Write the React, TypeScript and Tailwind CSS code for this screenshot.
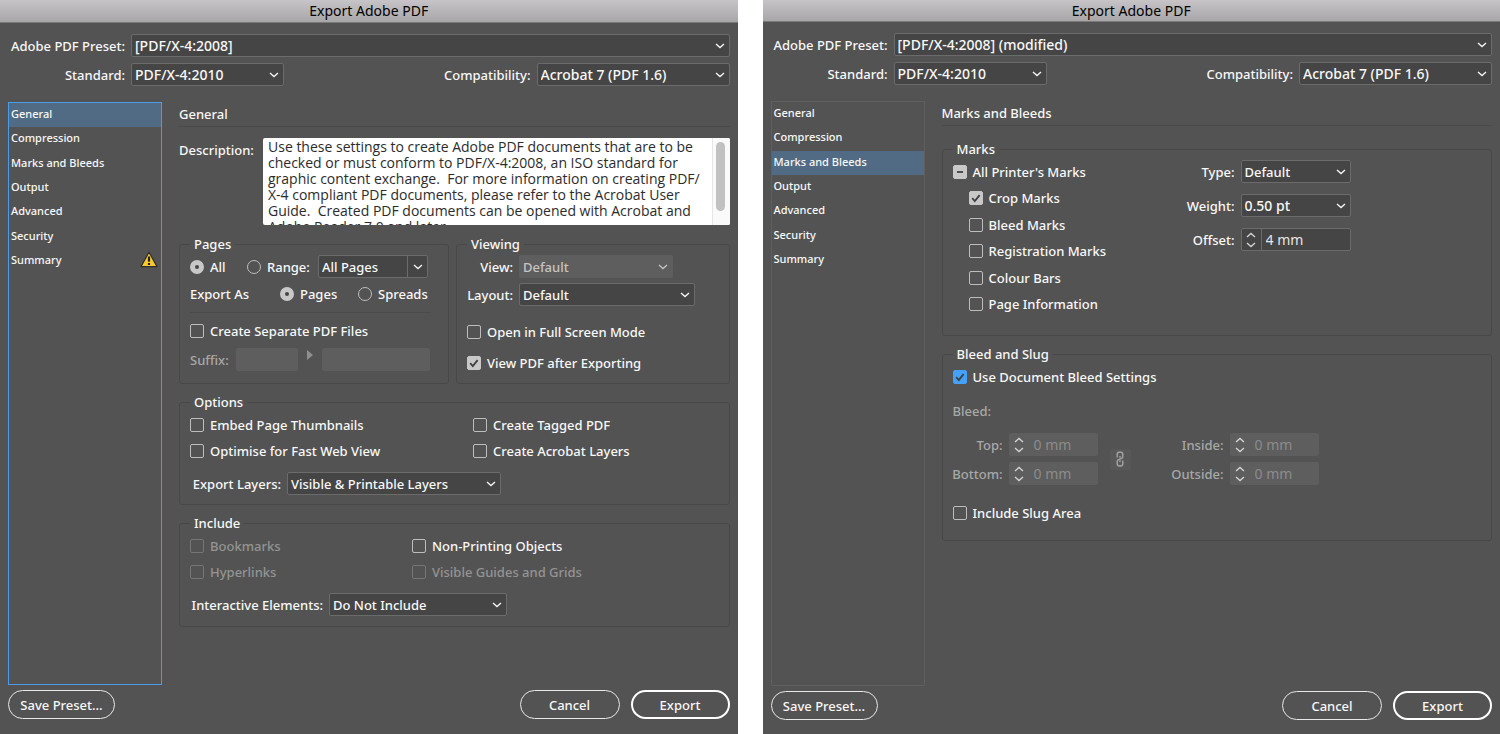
import { useId, type ReactNode } from "react";

function Chevron({ className = "" }: { className?: string }) {
  return (
    <svg viewBox="0 0 10 6" className={`h-[6px] w-[10px] ${className}`} fill="none" stroke="currentColor" strokeWidth="1.3" aria-hidden="true">
      <path d="M1 1l4 3.6L9 1" />
    </svg>
  );
}

type SelectProps = { label: string; value: string; width: string; labelWidth?: string; disabled?: boolean; large?: boolean };

function SelectRow({ label, value, width, labelWidth = "", disabled, large }: SelectProps) {
  const id = useId();
  return (
    <div className="flex items-center gap-[6px]">
      <label htmlFor={id} className={`flex shrink-0 justify-end whitespace-nowrap ${labelWidth}`}>
        {label}
      </label>
      <div className={`relative ${width}`}>
        <select
          id={id}
          disabled={disabled}
          className={`block h-[23px] w-full appearance-none rounded-[2px] border pr-6 pl-[3px] ${large ? "text-[14px]" : ""} ${
            disabled ? "border-[#5e5e5e] bg-[#5e5e5e] text-[#c4c4c4] opacity-100" : "border-[#6b6b6b] bg-[#454545]"
          }`}
        >
          <option>{value}</option>
        </select>
        <Chevron className={`pointer-events-none absolute top-[9px] right-[5px] ${disabled ? "text-[#c4c4c4]" : ""}`} />
      </div>
    </div>
  );
}

type CheckProps = { label: string; state?: "on" | "mixed" | "focus"; disabled?: boolean };

function Check({ label, state, disabled }: CheckProps) {
  return (
    <label className={`flex h-[18px] items-center gap-[6px] whitespace-nowrap ${disabled ? "text-[#949494]" : ""}`}>
      <span className="relative block size-[14px]">
        <input
          type="checkbox"
          defaultChecked={state !== undefined}
          disabled={disabled}
          className={`peer block size-[14px] appearance-none rounded-[2px] border ${
            disabled ? "border-[#767676]" : "border-[#bdbdbd]"
          } ${state === "focus" ? "checked:border-[#46a0f5] checked:bg-[#46a0f5]" : "checked:border-[#c8c8c8] checked:bg-[#c8c8c8]"}`}
        />
        <svg
          viewBox="0 0 14 14"
          className="pointer-events-none absolute inset-0 hidden size-[14px] peer-checked:block"
          fill="none"
          stroke="#404040"
          strokeWidth="1.8"
          aria-hidden="true"
        >
          {state === "mixed" ? <path d="M4 7h6" /> : <path d="M3.2 7.2l2.6 2.9 4.8-6" />}
        </svg>
      </span>
      {label}
    </label>
  );
}

function Radio({ label, name, checked }: { label: string; name: string; checked?: boolean }) {
  return (
    <label className="flex h-[18px] items-center gap-[6px] whitespace-nowrap">
      <input
        type="radio"
        name={name}
        defaultChecked={checked}
        className="block size-[14px] appearance-none rounded-full border border-[#bdbdbd] checked:border-[5px] checked:border-[#c8c8c8] checked:bg-[#454545]"
      />
      {label}
    </label>
  );
}

type StepperProps = { label: string; value: string; labelWidth: string; width: string; disabled?: boolean };

function Stepper({ label, value, labelWidth, width, disabled }: StepperProps) {
  const id = useId();
  return (
    <div className={`flex items-center gap-[6px] ${disabled ? "text-[#a8a8a8]" : ""}`}>
      <label htmlFor={id} className={`flex shrink-0 justify-end whitespace-nowrap ${labelWidth}`}>
        {label}
      </label>
      <div
        className={`flex h-[23px] rounded-[2px] border ${width} ${
          disabled ? "border-[#5e5e5e] bg-[#5e5e5e]" : "border-[#6b6b6b] bg-[#454545]"
        }`}
      >
        <div className={`flex w-[20px] shrink-0 flex-col items-center justify-center gap-[4px] border-r text-[#d5d5d5] ${disabled ? "border-transparent" : "border-[#6b6b6b]"}`}>
          <button type="button" aria-label={`Increase ${label}`} disabled={disabled}>
            <Chevron className="block rotate-180" />
          </button>
          <button type="button" aria-label={`Decrease ${label}`} disabled={disabled}>
            <Chevron className="block" />
          </button>
        </div>
        <input
          id={id}
          defaultValue={value}
          disabled={disabled}
          className={`w-full min-w-0 pl-1 text-[14px] font-normal ${disabled ? "text-[#8c8c8c]" : "text-[#e6e6e6]"}`}
        />
      </div>
    </div>
  );
}

function Group({ title, className = "", children }: { title: string; className?: string; children: ReactNode }) {
  return (
    <fieldset className={`min-w-0 rounded-[3px] border border-[#484848] px-[10px] ${className}`}>
      <legend className="px-[4px] leading-[18px]">{title}</legend>
      {children}
    </fieldset>
  );
}

function Warning() {
  return (
    <svg viewBox="0 0 18 17" className="h-[17px] w-[18px]" role="img" aria-label="Warning">
      <path d="M9 1.2L17 15.6H1z" fill="#f8ca2c" stroke="#2e2e2e" strokeWidth="1.2" strokeLinejoin="round" />
      <path d="M9 5.5v5.2" stroke="#222" strokeWidth="2.2" />
      <path d="M9 12v2" stroke="#222" strokeWidth="2.2" />
    </svg>
  );
}

const sections = ["General", "Compression", "Marks and Bleeds", "Output", "Advanced", "Security", "Summary"];

type DialogProps = {
  preset: string;
  current: string;
  titleClass: string;
  footerClass: string;
  focused?: boolean;
  warning?: boolean;
  children: ReactNode;
};

function ExportDialog({ preset, current, titleClass, footerClass, focused, warning, children }: DialogProps) {
  return (
    <section className="flex min-w-0 flex-col bg-[#535353] text-[13px] leading-[18px] font-medium text-[#f8f8f8]">
      <header
        className={`flex items-center justify-center border-b border-[#7a7a7a] bg-linear-to-b from-[#c6c4c6] to-[#a8a6a8] text-[14px] font-normal text-black ${titleClass}`}
      >
        <h1>Export Adobe PDF</h1>
      </header>
      <div className="flex flex-1 flex-col px-2 pt-[11px]">
        <div className="flex flex-col gap-[6px]">
          <SelectRow label="Adobe PDF Preset:" value={preset} labelWidth="w-[117px]" width="flex-1" large />
          <div className="flex justify-between">
            <SelectRow label="Standard:" value="PDF/X-4:2010" labelWidth="w-[117px]" width="w-[153px]" large />
            <SelectRow label="Compatibility:" value="Acrobat 7 (PDF 1.6)" width="w-[193px]" large />
          </div>
        </div>
        <div className="mt-4 flex flex-1 gap-[17px]">
          <nav className={`w-[154px] shrink-0 border text-[11px] ${focused ? "border-[#4c9be8]" : "border-[#5f5f5f]"}`}>
            <ul className="flex h-[170px] flex-col">
              {sections.map((name) => (
                <li key={name} className={`flex flex-1 ${name === current ? "bg-[#516b84]" : ""}`}>
                  <button type="button" className="flex flex-1 items-center justify-between pr-[3px] pb-[2px] pl-[2px] text-left">
                    {name}
                    {warning && name === "Summary" && <Warning />}
                  </button>
                </li>
              ))}
            </ul>
          </nav>
          <div className="min-w-0 flex-1">
            <h2 className="border-b border-[#4a4a4a] pt-[3px] pb-[3px]">{current}</h2>
            {children}
          </div>
        </div>
        <footer className={`mt-[5px] flex gap-[11px] ${footerClass}`}>
          <button type="button" className="mr-auto h-[29px] w-[107px] rounded-full border border-[#e8e8e8]">
            Save Preset...
          </button>
          <button type="button" className="h-[29px] w-[100px] rounded-full border border-[#e8e8e8]">
            Cancel
          </button>
          <button type="button" className="h-[29px] w-[99px] rounded-full border-2 border-white">
            Export
          </button>
        </footer>
      </div>
    </section>
  );
}

const description = [
  "Use these settings to create Adobe PDF documents that are to be",
  "checked or must conform to PDF/X-4:2008, an ISO standard for",
  "graphic content exchange.  For more information on creating PDF/",
  "X-4 compliant PDF documents, please refer to the Acrobat User",
  "Guide.  Created PDF documents can be opened with Acrobat and",
  "Adobe Reader 7.0 and later.",
].join("\n");

function GeneralPanel() {
  return (
    <>
      <div className="mt-[11px] flex gap-[6px]">
        <label htmlFor="description" className="w-[78px] shrink-0 pt-[3px]">
          Description:
        </label>
        <div className="flex h-[87px] min-w-0 flex-1 overflow-hidden rounded-[2px] bg-white">
          <textarea
            id="description"
            readOnly
            value={description}
            className="block min-w-0 flex-1 resize-none overflow-hidden pt-[1px] pl-[5px] font-['Open_Sans',sans-serif] text-[14px] leading-[16px] font-normal whitespace-pre text-[#2c2c2c]"
          />
          <div className="w-[18px] border-l border-[#e6e6e6] bg-[#fafafa] pt-1 pl-[3px]">
            <div className="h-[69px] w-[9px] rounded-full bg-[#c1c1c1]" />
          </div>
        </div>
      </div>
      <div className="mt-[10px] grid grid-cols-[270px_1fr] gap-[7px]">
        <Group title="Pages" className="pb-[11px]">
          <div className="flex items-center pt-[2px]">
            <div className="w-[57px]">
              <Radio label="All" name="range" checked />
            </div>
            <div className="w-[71px]">
              <Radio label="Range:" name="range" />
            </div>
            <div className="flex h-[23px] w-[110px] rounded-[2px] border border-[#6b6b6b] bg-[#454545]">
              <input aria-label="Page range" defaultValue="All Pages" className="w-0 flex-1 pl-[3px]" />
              <button type="button" aria-label="Page range choices" className="flex w-[20px] items-center justify-center border-l border-[#6b6b6b]">
                <Chevron />
              </button>
            </div>
          </div>
          <div className="mt-[7px] flex">
            <span className="w-[90px] shrink-0">Export As</span>
            <div className="w-[78px]">
              <Radio label="Pages" name="unit" checked />
            </div>
            <Radio label="Spreads" name="unit" />
          </div>
          <div className="mt-[9px] mr-[7px] mb-[9px] border-t border-[#4a4a4a]" />
          <Check label="Create Separate PDF Files" />
          <div className="mt-[8px] flex text-[#a8a8a8]">
            <label htmlFor="suffix" className="w-[46px] shrink-0 pt-[3px]">
              Suffix:
            </label>
            <input id="suffix" disabled className="h-[23px] w-[62px] rounded-[2px] bg-[#5e5e5e]" />
            <svg viewBox="0 0 6 10" className="mx-[9px] mt-[2px] h-[10px] w-[6px]" fill="#8f8f8f" aria-hidden="true">
              <path d="M0 0l6 5-6 5z" />
            </svg>
            <input aria-label="Suffix text" disabled className="h-[23px] w-[108px] rounded-[2px] bg-[#5e5e5e]" />
          </div>
        </Group>
        <Group title="Viewing" className="pb-[11px]">
          <div className="flex flex-col gap-[5px] pt-[2px]">
            <SelectRow label="View:" value="Default" labelWidth="w-[46px]" width="w-[154px]" disabled />
            <SelectRow label="Layout:" value="Default" labelWidth="w-[46px]" width="w-[176px]" />
          </div>
          <div className="mt-[17px] flex flex-col gap-[13px]">
            <Check label="Open in Full Screen Mode" />
            <Check label="View PDF after Exporting" state="on" />
          </div>
        </Group>
      </div>
      <Group title="Options" className="mt-[9px] pb-[9px]">
        <div className="grid grid-cols-[283px_1fr] gap-y-[8px] pt-[5px] pb-[12px]">
          <Check label="Embed Page Thumbnails" />
          <Check label="Create Tagged PDF" />
          <Check label="Optimise for Fast Web View" />
          <Check label="Create Acrobat Layers" />
        </div>
        <SelectRow label="Export Layers:" value="Visible & Printable Layers" width="w-[214px]" labelWidth="w-[91px]" />
      </Group>
      <Group title="Include" className="mt-[9px] pb-[10px]">
        <div className="grid grid-cols-[222px_1fr] gap-y-[8px] pt-[5px] pb-[12px]">
          <Check label="Bookmarks" disabled />
          <Check label="Non-Printing Objects" />
          <Check label="Hyperlinks" disabled />
          <Check label="Visible Guides and Grids" disabled />
        </div>
        <SelectRow label="Interactive Elements:" value="Do Not Include" width="w-[178px]" labelWidth="w-[133px]" />
      </Group>
    </>
  );
}

function MarksPanel() {
  return (
    <>
      <Group title="Marks" className="mt-[14px] pb-[22px]">
        <div className="flex">
          <div className="flex h-[155px] w-[234px] flex-col justify-between pt-[5px]">
            <Check label="All Printer's Marks" state="mixed" />
            {["Crop Marks", "Bleed Marks", "Registration Marks", "Colour Bars", "Page Information"].map((name) => (
              <div key={name} className="pl-4">
                <Check label={name} state={name === "Crop Marks" ? "on" : undefined} />
              </div>
            ))}
          </div>
          <div className="flex flex-col gap-[11px] pt-[2px]">
            <SelectRow label="Type:" value="Default" labelWidth="w-[48px]" width="w-[110px]" />
            <SelectRow label="Weight:" value="0.50 pt" labelWidth="w-[48px]" width="w-[110px]" large />
            <Stepper label="Offset:" value="4 mm" labelWidth="w-[48px]" width="w-[110px]" />
          </div>
        </div>
      </Group>
      <Group title="Bleed and Slug" className="mt-[9px] pb-[18px]">
        <div className="pt-[5px]">
          <Check label="Use Document Bleed Settings" state="focus" />
        </div>
        <p className="mt-4 text-[#a8a8a8]">Bleed:</p>
        <div className="mt-[13px] flex items-center">
          <div className="flex flex-col gap-[6px]">
            <Stepper label="Top:" value="0 mm" labelWidth="w-[50px]" width="w-[89px]" disabled />
            <Stepper label="Bottom:" value="0 mm" labelWidth="w-[50px]" width="w-[89px]" disabled />
          </div>
          <button
            type="button"
            disabled
            aria-label="Make all settings the same"
            className="ml-[12px] flex size-[21px] items-center justify-center rounded-[2px] bg-[#585858] text-[#a0a0a0]"
          >
            <svg viewBox="0 0 8 16" className="h-[16px] w-[8px]" fill="none" stroke="currentColor" strokeWidth="1.5" aria-hidden="true">
              <path d="M1.200 6.500V3.600Q1.200 1 4 1T6.800 3.600V5.400Q6.800 7.200 5.200 7.600L4 8" />
              <path d="M6.800 9.500V12.400Q6.800 15 4 15T1.200 12.400V10.600Q1.200 8.800 2.800 8.400L4 8" />
              <path d="M4 5v1.800M4 9.200V11" />
            </svg>
          </button>
          <div className="ml-[38px] flex flex-col gap-[6px]">
            <Stepper label="Inside:" value="0 mm" labelWidth="w-[55px]" width="w-[89px]" disabled />
            <Stepper label="Outside:" value="0 mm" labelWidth="w-[55px]" width="w-[89px]" disabled />
          </div>
        </div>
        <div className="mt-[19px]">
          <Check label="Include Slug Area" />
        </div>
      </Group>
    </>
  );
}

export default function App() {
  return (
    <main className="grid min-h-screen grid-cols-2 gap-[25px] bg-white font-['Noto_Sans',sans-serif]">
      <ExportDialog preset="[PDF/X-4:2008]" current="General" titleClass="h-[23px]" footerClass="pb-[15px]" focused warning>
        <GeneralPanel />
      </ExportDialog>
      <ExportDialog preset="[PDF/X-4:2008] (modified)" current="Marks and Bleeds" titleClass="h-[22px]" footerClass="pb-[14px]">
        <MarksPanel />
      </ExportDialog>
    </main>
  );
}
